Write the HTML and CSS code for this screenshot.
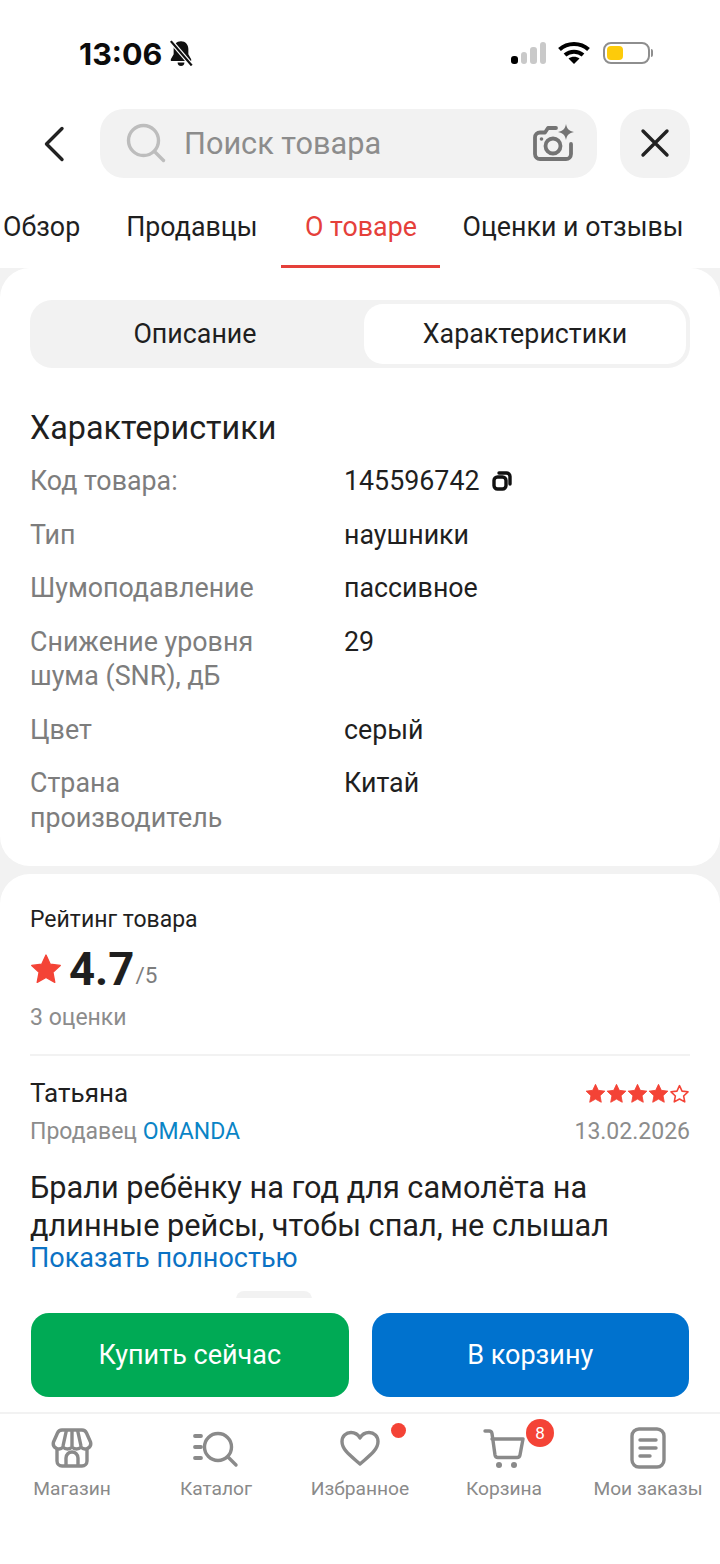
FILE: index.html
```html
<!DOCTYPE html>
<html lang="ru">
<head>
    <meta charset="UTF-8">
    <meta name="viewport" content="width=device-width, initial-scale=1.0">
    <title>О товаре</title>
    <link rel="stylesheet" href="styles.css">
</head>
<body>
    <div class="screen">
        <!-- Status bar -->
        <div class="status-bar">
            <div class="status-left">
                <span class="clock">13:06</span>
                <svg class="bell" width="24" height="26" viewBox="2 1 20 23">
                    <path d="M12 2c-4 0-6.500 3-6.500 7v4.500L3 18v1.500h18V18l-2.500-4.500V9C18.500 5 16 2 12 2z" fill="#111"/>
                    <path d="M9 21a3 3 0 0 0 6 0z" fill="#111"/>
                    <path d="M3.500 2.500l18 21" stroke="#fff" stroke-width="4"/>
                    <path d="M3 2l18.500 21.500" stroke="#111" stroke-width="2"/>
                </svg>
            </div>
            <div class="status-right">
                <div class="signal">
                    <span class="bar bar-1"></span>
                    <span class="bar bar-2"></span>
                    <span class="bar bar-3"></span>
                    <span class="bar bar-4"></span>
                </div>
                <svg width="32" height="24" viewBox="0 0 32 24">
                    <path d="M1.500 8.500C9.500 1 22.500 1 30.500 8.500" fill="none" stroke="#000" stroke-width="4"/>
                    <path d="M7 14c5-4.500 13-4.500 18 0" fill="none" stroke="#000" stroke-width="4"/>
                    <path d="M10.500 17.500c3-2.500 8-2.500 11 0L16 23z" fill="#000"/>
                </svg>
                <div class="battery">
                    <div class="battery-body"><span class="battery-level"></span></div>
                    <span class="battery-cap"></span>
                </div>
            </div>
        </div>

        <!-- Search -->
        <div class="search-row">
            <div class="back">
                <svg width="24" height="38" viewBox="0 0 24 38">
                    <path d="M20 3.500L4.500 19 20 34.500" fill="none" stroke="#222" stroke-width="3.400" stroke-linecap="round" stroke-linejoin="round"/>
                </svg>
            </div>
            <div class="search-box">
                <svg width="40" height="40" viewBox="0 0 40 40">
                    <circle cx="17.500" cy="17.500" r="15" fill="none" stroke="#bdbdbd" stroke-width="3.400"/>
                    <path d="M28.500 28.500l9 9" stroke="#bdbdbd" stroke-width="3.400" stroke-linecap="round"/>
                </svg>
                <span class="search-text">Поиск товара</span>
                <svg class="camera" width="44" height="40" viewBox="0 0 44 40">
                    <path d="M24 5h-8l-3 4.500H8a5 5 0 0 0-5 5V31a5 5 0 0 0 5 5h26a5 5 0 0 0 5-5V21" fill="none" stroke="#747474" stroke-width="3.800" stroke-linecap="round" stroke-linejoin="round"/>
                    <circle cx="21" cy="23" r="7.500" fill="none" stroke="#747474" stroke-width="3.800"/>
                    <circle cx="9.500" cy="16" r="1.800" fill="#747474"/>
                    <path d="M34 1c1 5 3 7 8 8-5 1-7 3-8 8-1-5-3-7-8-8 5-1 7-3 8-8z" fill="#747474"/>
                </svg>
            </div>
            <div class="close-btn">
                <svg width="30" height="30" viewBox="0 0 30 30">
                    <path d="M3 3l24 24M27 3L3 27" stroke="#222" stroke-width="3.400" stroke-linecap="round"/>
                </svg>
            </div>
        </div>

        <!-- Tabs -->
        <div class="tabs">
            <span class="tab tab-overview">Обзор</span>
            <span class="tab tab-sellers">Продавцы</span>
            <span class="tab tab-active">О товаре</span>
            <span class="tab tab-reviews">Оценки и отзывы</span>
        </div>

        <div class="content">
            <!-- About product -->
            <div class="card card-specs">
                <div class="segment">
                    <div class="segment-item">Описание</div>
                    <div class="segment-item segment-active">Характеристики</div>
                </div>
                <h2 class="specs-title">Характеристики</h2>
                <div class="specs">
                    <div class="spec-name">Код товара:</div>
                    <div class="spec-value">145596742
                        <svg class="copy" width="20" height="20" viewBox="0 0 20 20">
                            <rect x="2" y="6" width="12" height="12" rx="3.500" fill="none" stroke="#111" stroke-width="3.400"/>
                            <path d="M7 2h7.500A3.500 3.500 0 0 1 18 5.500V13" fill="none" stroke="#111" stroke-width="3.400" stroke-linecap="round"/>
                        </svg>
                    </div>
                    <div class="spec-name">Тип</div>
                    <div class="spec-value">наушники</div>
                    <div class="spec-name">Шумоподавление</div>
                    <div class="spec-value">пассивное</div>
                    <div class="spec-name">Снижение уровня шума (SNR), дБ</div>
                    <div class="spec-value">29</div>
                    <div class="spec-name">Цвет</div>
                    <div class="spec-value">серый</div>
                    <div class="spec-name">Страна производитель</div>
                    <div class="spec-value">Китай</div>
                </div>
            </div>

            <!-- Rating and reviews -->
            <div class="card card-rating">
                <div class="rating-label">Рейтинг товара</div>
                <div class="rating-row">
                    <svg width="32" height="32" viewBox="0 0 24 24">
                        <path d="M12 1.500l3.200 6.900 7.500.9-5.500 5.200 1.400 7.500L12 18.400l-6.600 3.600 1.400-7.500L1.300 9.300l7.500-.9z" fill="#f44336" stroke="#f44336" stroke-linejoin="round"/>
                    </svg>
                    <span class="rating-value">4.7</span>
                    <span class="rating-max">/5</span>
                </div>
                <div class="rating-count">3 оценки</div>
                <div class="divider"></div>
                <div class="review-head">
                    <span class="review-name">Татьяна</span>
                    <span class="stars">
                        <svg width="21" height="21" viewBox="0 0 24 24"><path class="star-on" d="M12 1.500l3.200 6.900 7.500.9-5.500 5.200 1.400 7.500L12 18.400l-6.600 3.600 1.400-7.500L1.300 9.300l7.500-.9z"/></svg>
                        <svg width="21" height="21" viewBox="0 0 24 24"><path class="star-on" d="M12 1.500l3.200 6.900 7.500.9-5.500 5.200 1.400 7.500L12 18.400l-6.600 3.600 1.400-7.500L1.300 9.300l7.500-.9z"/></svg>
                        <svg width="21" height="21" viewBox="0 0 24 24"><path class="star-on" d="M12 1.500l3.200 6.900 7.500.9-5.500 5.200 1.400 7.500L12 18.400l-6.600 3.600 1.400-7.500L1.300 9.300l7.500-.9z"/></svg>
                        <svg width="21" height="21" viewBox="0 0 24 24"><path class="star-on" d="M12 1.500l3.200 6.900 7.500.9-5.500 5.200 1.400 7.500L12 18.400l-6.600 3.600 1.400-7.500L1.300 9.300l7.500-.9z"/></svg>
                        <svg width="21" height="21" viewBox="0 0 24 24"><path class="star-off" d="M12 3l2.900 6.300 6.800.8-5 4.700 1.300 6.800-6-3.300-6 3.300 1.300-6.800-5-4.700 6.800-.8z"/></svg>
                    </span>
                </div>
                <div class="review-meta">
                    <span>Продавец <span class="seller">OMANDA</span></span>
                    <span>13.02.2026</span>
                </div>
                <p class="review-text">Брали ребёнку на год для самолёта на длинные рейсы, чтобы спал, не слышал</p>
                <div class="show-more">Показать полностью</div>
                <div class="peek"></div>
            </div>
        </div>

        <!-- Bottom -->
        <div class="bottom">
            <div class="buttons">
                <div class="btn btn-buy">Купить сейчас</div>
                <div class="btn btn-cart">В корзину</div>
            </div>
            <div class="nav">
                <div class="nav-item">
                    <svg width="42" height="42" viewBox="0 0 42 42">
                        <g fill="none" stroke="#8a8a8a" stroke-width="3.400" stroke-linejoin="round">
                            <path d="M6 21v13a5 5 0 0 0 5 5h20a5 5 0 0 0 5-5V21"/>
                            <path d="M11 3h20a5 5 0 0 1 4.500 3l4 9a5.500 5.500 0 0 1-9.500 5 6 6 0 0 1-9 0 6 6 0 0 1-9 0A5.500 5.500 0 0 1 2.500 15l4-9A5 5 0 0 1 11 3z"/>
                            <path d="M15.500 3L12 19M26.500 3L30 19M21 3v16"/>
                            <path d="M15 39V31a6 6 0 0 1 12 0v8"/>
                        </g>
                    </svg>
                    <span>Магазин</span>
                </div>
                <div class="nav-item">
                    <svg width="48" height="42" viewBox="0 0 48 42">
                        <g fill="none" stroke="#8a8a8a" stroke-width="3.400" stroke-linecap="round">
                            <circle cx="26" cy="20" r="13.500"/>
                            <path d="M36 30l8 8"/>
                            <path d="M3 9h6M3 20h6M3 31h6" stroke-width="3.800"/>
                        </g>
                    </svg>
                    <span>Каталог</span>
                </div>
                <div class="nav-item">
                    <svg width="42" height="42" viewBox="0 0 42 42">
                        <path d="M21 37C12 29 3 23 3 14.500 3 9 7 5.500 12 5.500c4 0 7 2 9 5.500 2-3.500 5-5.500 9-5.500 5 0 9 3.500 9 9C39 23 30 29 21 37z" fill="none" stroke="#8a8a8a" stroke-width="3.400" stroke-linejoin="round"/>
                    </svg>
                    <span>Избранное</span>
                    <i class="dot"></i>
                </div>
                <div class="nav-item">
                    <svg width="46" height="42" viewBox="0 0 46 42">
                        <g fill="none" stroke="#8a8a8a" stroke-width="3.400" stroke-linecap="round" stroke-linejoin="round">
                            <path d="M4 4h4a3 3 0 0 1 3 2.500L14 28a3 3 0 0 0 3 2.500h19a3 3 0 0 0 3-2.500l3-16H11"/>
                        </g>
                        <circle cx="18" cy="38" r="3" fill="#8a8a8a"/>
                        <circle cx="33" cy="38" r="3" fill="#8a8a8a"/>
                    </svg>
                    <span>Корзина</span>
                    <i class="badge">8</i>
                </div>
                <div class="nav-item">
                    <svg width="36" height="42" viewBox="0 0 36 42">
                        <rect x="2" y="2" width="32" height="38" rx="7" fill="none" stroke="#8a8a8a" stroke-width="3.400"/>
                        <path d="M10 13h16M10 21h16M10 29h10" stroke="#8a8a8a" stroke-width="3.400" stroke-linecap="round"/>
                    </svg>
                    <span>Мои заказы</span>
                </div>
            </div>
        </div>
    </div>
</body>
</html>
```

FILE: styles.css
```css
* {
    box-sizing: border-box;
}
body {
    margin: 0;
    background: #fff;
    font-family: Roboto, sans-serif;
    color: #1f1f1f;
}
.screen {
    width: 720px;
    height: 1564px;
    overflow: hidden;
    display: flex;
    flex-direction: column;
}

/* Status bar */
.status-bar {
    height: 62px;
    margin-top: 22px;
    padding: 0 67px 0 79px;
    display: flex;
    justify-content: space-between;
    align-items: center;
}
.status-left {
    display: flex;
    align-items: center;
    gap: 7px;
}
.clock {
    font-family: Inter, sans-serif;
    font-size: 30.5px;
    font-weight: 700;
    color: #0c0c0c;
}
.status-right {
    display: flex;
    align-items: center;
    gap: 12px;
}
.signal {
    display: flex;
    align-items: flex-end;
    gap: 3px;
    height: 22px;
}
.bar {
    width: 6.500px;
    border-radius: 3px;
    background: #c9c9c9;
}
.bar-1 { height: 8px; background: #000; }
.bar-2 { height: 12px; }
.bar-3 { height: 17px; }
.bar-4 { height: 22px; }
.battery {
    margin-left: 1px;
    display: flex;
    align-items: center;
    gap: 1px;
}
.battery-body {
    width: 47px;
    height: 22px;
    padding: 2px;
    border: 2px solid #8e8e8e;
    border-radius: 8px;
}
.battery-level {
    display: block;
    width: 16px;
    height: 14px;
    border-radius: 4px;
    background: #fdcb0a;
}
.battery-cap {
    width: 2px;
    height: 8px;
    border-radius: 0 2px 2px 0;
    background: #8e8e8e;
}

/* Search */
.search-row {
    height: 70px;
    margin-top: 24px;
    padding: 0 30px 0 42px;
    display: flex;
    align-items: center;
}
.back {
    width: 58px;
    height: 38px;
    margin-top: 2px;
}
.search-box {
    width: 497px;
    height: 69px;
    padding: 0 21px 0 26px;
    border-radius: 24px;
    background: #f2f2f2;
    display: flex;
    align-items: center;
}
.search-text {
    margin-left: 18px;
    flex: 1;
    font-size: 30.700px;
    color: #8c8c8c;
}
.close-btn {
    width: 70px;
    height: 69px;
    margin-left: 23px;
    border-radius: 24px;
    background: #f2f2f2;
    display: flex;
    align-items: center;
    justify-content: center;
}

/* Tabs */
.tabs {
    height: 90px;
    display: flex;
    align-items: stretch;
    font-size: 26.800px;
}
.tab {
    padding-top: 33px;
    color: #1f1f1f;
    white-space: nowrap;
}
.tab-overview { margin-left: 3px; }
.tab-sellers { margin-left: 46px; }
.tab-active {
    width: 159px;
    margin-left: 24px;
    text-align: center;
    color: #e5403a;
    border-bottom: 3px solid #e5403a;
}
.tab-reviews { margin-left: 22px; }

/* Cards */
.content {
    flex: 1;
    min-height: 0;
    overflow: hidden;
    background: #f2f2f2;
}
.card {
    background: #fff;
    border-radius: 30px;
}
.card-specs {
    height: 598px;
    padding: 32px 30px 0;
}
.card-rating {
    height: 430px;
    margin-top: 8px;
    padding: 32px 30px 0;
    border-radius: 30px 30px 0 0;
    position: relative;
}
.segment {
    height: 68px;
    padding: 4px;
    display: flex;
    border-radius: 22px;
    background: #f2f2f2;
    font-size: 26.800px;
}
.segment-item {
    flex: 1;
    display: flex;
    align-items: center;
    justify-content: center;
    border-radius: 19px;
}
.segment-item:first-child {
    padding-right: 8px;
}
.segment-active {
    flex: 0 0 322px;
    background: #fff;
}
.specs-title {
    margin: 41px 0 17px;
    font-size: 32.300px;
    line-height: 38px;
    font-weight: 400;
}
.specs {
    display: grid;
    grid-template-columns: 314px 1fr;
    row-gap: 19px;
    font-size: 26.800px;
    line-height: 34.500px;
}
.spec-name {
    color: #7d7d7d;
    padding-right: 40px;
}
.spec-value {
    display: flex;
    align-items: center;
    align-self: start;
    gap: 12px;
}

/* Rating */
.rating-label {
    font-size: 23px;
    line-height: 28px;
}
.rating-row {
    height: 52px;
    margin-top: 9px;
    display: flex;
    align-items: center;
}
.rating-value {
    margin-left: 7px;
    font-size: 45.500px;
    font-weight: 700;
}
.rating-max {
    margin: 12px 0 0 1px;
    font-size: 22.500px;
    color: #7d7d7d;
}
.rating-count {
    margin-top: 8px;
    font-size: 23px;
    line-height: 30px;
    color: #8c8c8c;
}
.divider {
    height: 2px;
    margin-top: 21px;
    background: #f2f2f2;
}
.review-head {
    margin-top: 20px;
    display: flex;
    justify-content: space-between;
    align-items: center;
    font-size: 26px;
    line-height: 34px;
}
.stars {
    display: flex;
}
.star-on {
    fill: #f44336;
    stroke: #f44336;
    stroke-linejoin: round;
}
.star-off {
    fill: none;
    stroke: #f44336;
    stroke-width: 1.800;
    stroke-linejoin: round;
}
.review-meta {
    margin-top: 7px;
    display: flex;
    justify-content: space-between;
    font-size: 23px;
    line-height: 30px;
    color: #8c8c8c;
}
.seller {
    color: #0a84c6;
}
.review-text {
    margin: 22px 0 0;
    font-size: 30.700px;
    line-height: 38px;
    color: #1f1f1f;
}
.show-more {
    font-size: 27px;
    line-height: 26px;
    color: #0b72c4;
}
.peek {
    position: absolute;
    left: 236px;
    top: 417px;
    width: 76px;
    height: 8px;
    border-radius: 14px 14px 0 0;
    background: #f2f2f2;
}

/* Bottom */
.bottom {
    height: 266px;
    padding-top: 15px;
    background: #fff;
    position: relative;
}
.buttons {
    height: 99px;
    padding: 0 31px;
    display: flex;
    gap: 23px;
}
.btn {
    flex: 1;
    height: 84px;
    border-radius: 18px;
    display: flex;
    align-items: center;
    justify-content: center;
    font-size: 27px;
    color: #fff;
}
.btn-buy { background: #00aa55; }
.btn-cart { background: #0072ce; }
.nav {
    height: 152px;
    border-top: 2px solid #f2f2f2;
    display: grid;
    grid-template-columns: repeat(5, 144px);
}
.nav-item {
    position: relative;
    padding-top: 13px;
    display: flex;
    flex-direction: column;
    align-items: center;
    gap: 8px;
    font-size: 19.200px;
    color: #8a8a8a;
    white-space: nowrap;
}
.dot {
    position: absolute;
    left: 103px;
    top: 9px;
    width: 15px;
    height: 15px;
    border-radius: 50%;
    background: #f44336;
}
.badge {
    position: absolute;
    left: 94px;
    top: 5px;
    width: 28px;
    height: 28px;
    border-radius: 50%;
    background: #f44336;
    color: #fff;
    font-size: 17px;
    font-style: normal;
    line-height: 28px;
    text-align: center;
}
```
